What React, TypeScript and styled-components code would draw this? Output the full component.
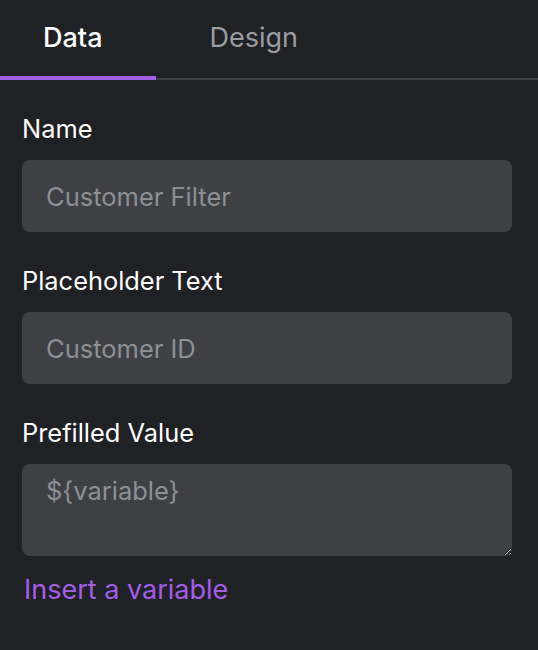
import React from "react";
import styled, { createGlobalStyle } from "styled-components";

const Global = createGlobalStyle`
  html, body {
    margin: 0;
    padding: 0;
    background: #202125;
    height: 100%;
  }
  body {
    font-family: Inter, "Noto Sans", sans-serif;
    -webkit-font-smoothing: antialiased;
  }
  * { box-sizing: border-box; }
`;

const Panel = styled.div`
  width: 538px;
  min-height: 650px;
  background: #202125;
  color: #ffffff;
`;

const TabBar = styled.div`
  display: flex;
  gap: 10px;
  height: 80px;
  border-bottom: 2px solid #3e3f44;
`;

const Tab = styled.button<{ $active?: boolean }>`
  background: none;
  border: none;
  margin: 0 0 -2px;
  padding: 24px 54px 0 43px;
  font-family: inherit;
  font-size: 27px;
  font-weight: ${(p) => (p.$active ? 500 : 400)};
  color: ${(p) => (p.$active ? "#ffffff" : "#9a9ca1")};
  line-height: 1;
  display: flex;
  align-items: flex-start;
  border-bottom: 4px solid ${(p) => (p.$active ? "#a35ee8" : "transparent")};
  cursor: pointer;
`;

const Form = styled.div`
  padding: 34px 26px 0 22px;
  display: flex;
  flex-direction: column;
`;

const Field = styled.div`
  display: flex;
  flex-direction: column;
  gap: 16px;
  margin-bottom: 34px;

  &:last-of-type {
    margin-bottom: 17px;
  }
`;

const Label = styled.label`
  font-size: 25.4px;
  line-height: 30px;
  color: #ffffff;
`;

const Input = styled.input`
  display: block;
  width: 100%;
  height: 72px;
  border: none;
  outline: none;
  border-radius: 8px;
  background: #3f4045;
  padding: 0 24px;
  font-family: inherit;
  font-size: 25.5px;
  color: #ffffff;

  &::placeholder {
    color: #8c8f94;
  }
`;

const TextArea = styled.textarea`
  display: block;
  width: 100%;
  height: 92px;
  border: none;
  outline: none;
  border-radius: 8px;
  background: #3f4045;
  padding: 12px 24px;
  font-family: inherit;
  font-size: 25.5px;
  line-height: 1.2;
  color: #ffffff;
  resize: vertical;
  color-scheme: dark;

  &::placeholder {
    color: #8c8f94;
  }
`;

const LinkButton = styled.a`
  font-size: 27px;
  line-height: 34px;
  color: #a35ee8;
  padding-left: 2px;
  text-decoration: none;
  cursor: pointer;
`;

export default function App() {
  return (
    <>
      <Global />
      <Panel>
        <TabBar>
          <Tab $active>Data</Tab>
          <Tab>Design</Tab>
        </TabBar>
        <Form>
          <Field>
            <Label>Name</Label>
            <Input placeholder="Customer Filter" />
          </Field>
          <Field>
            <Label>Placeholder Text</Label>
            <Input placeholder="Customer ID" />
          </Field>
          <Field>
            <Label>Prefilled Value</Label>
            <TextArea placeholder="${variable}" />
          </Field>
          <LinkButton>Insert a variable</LinkButton>
        </Form>
      </Panel>
    </>
  );
}
